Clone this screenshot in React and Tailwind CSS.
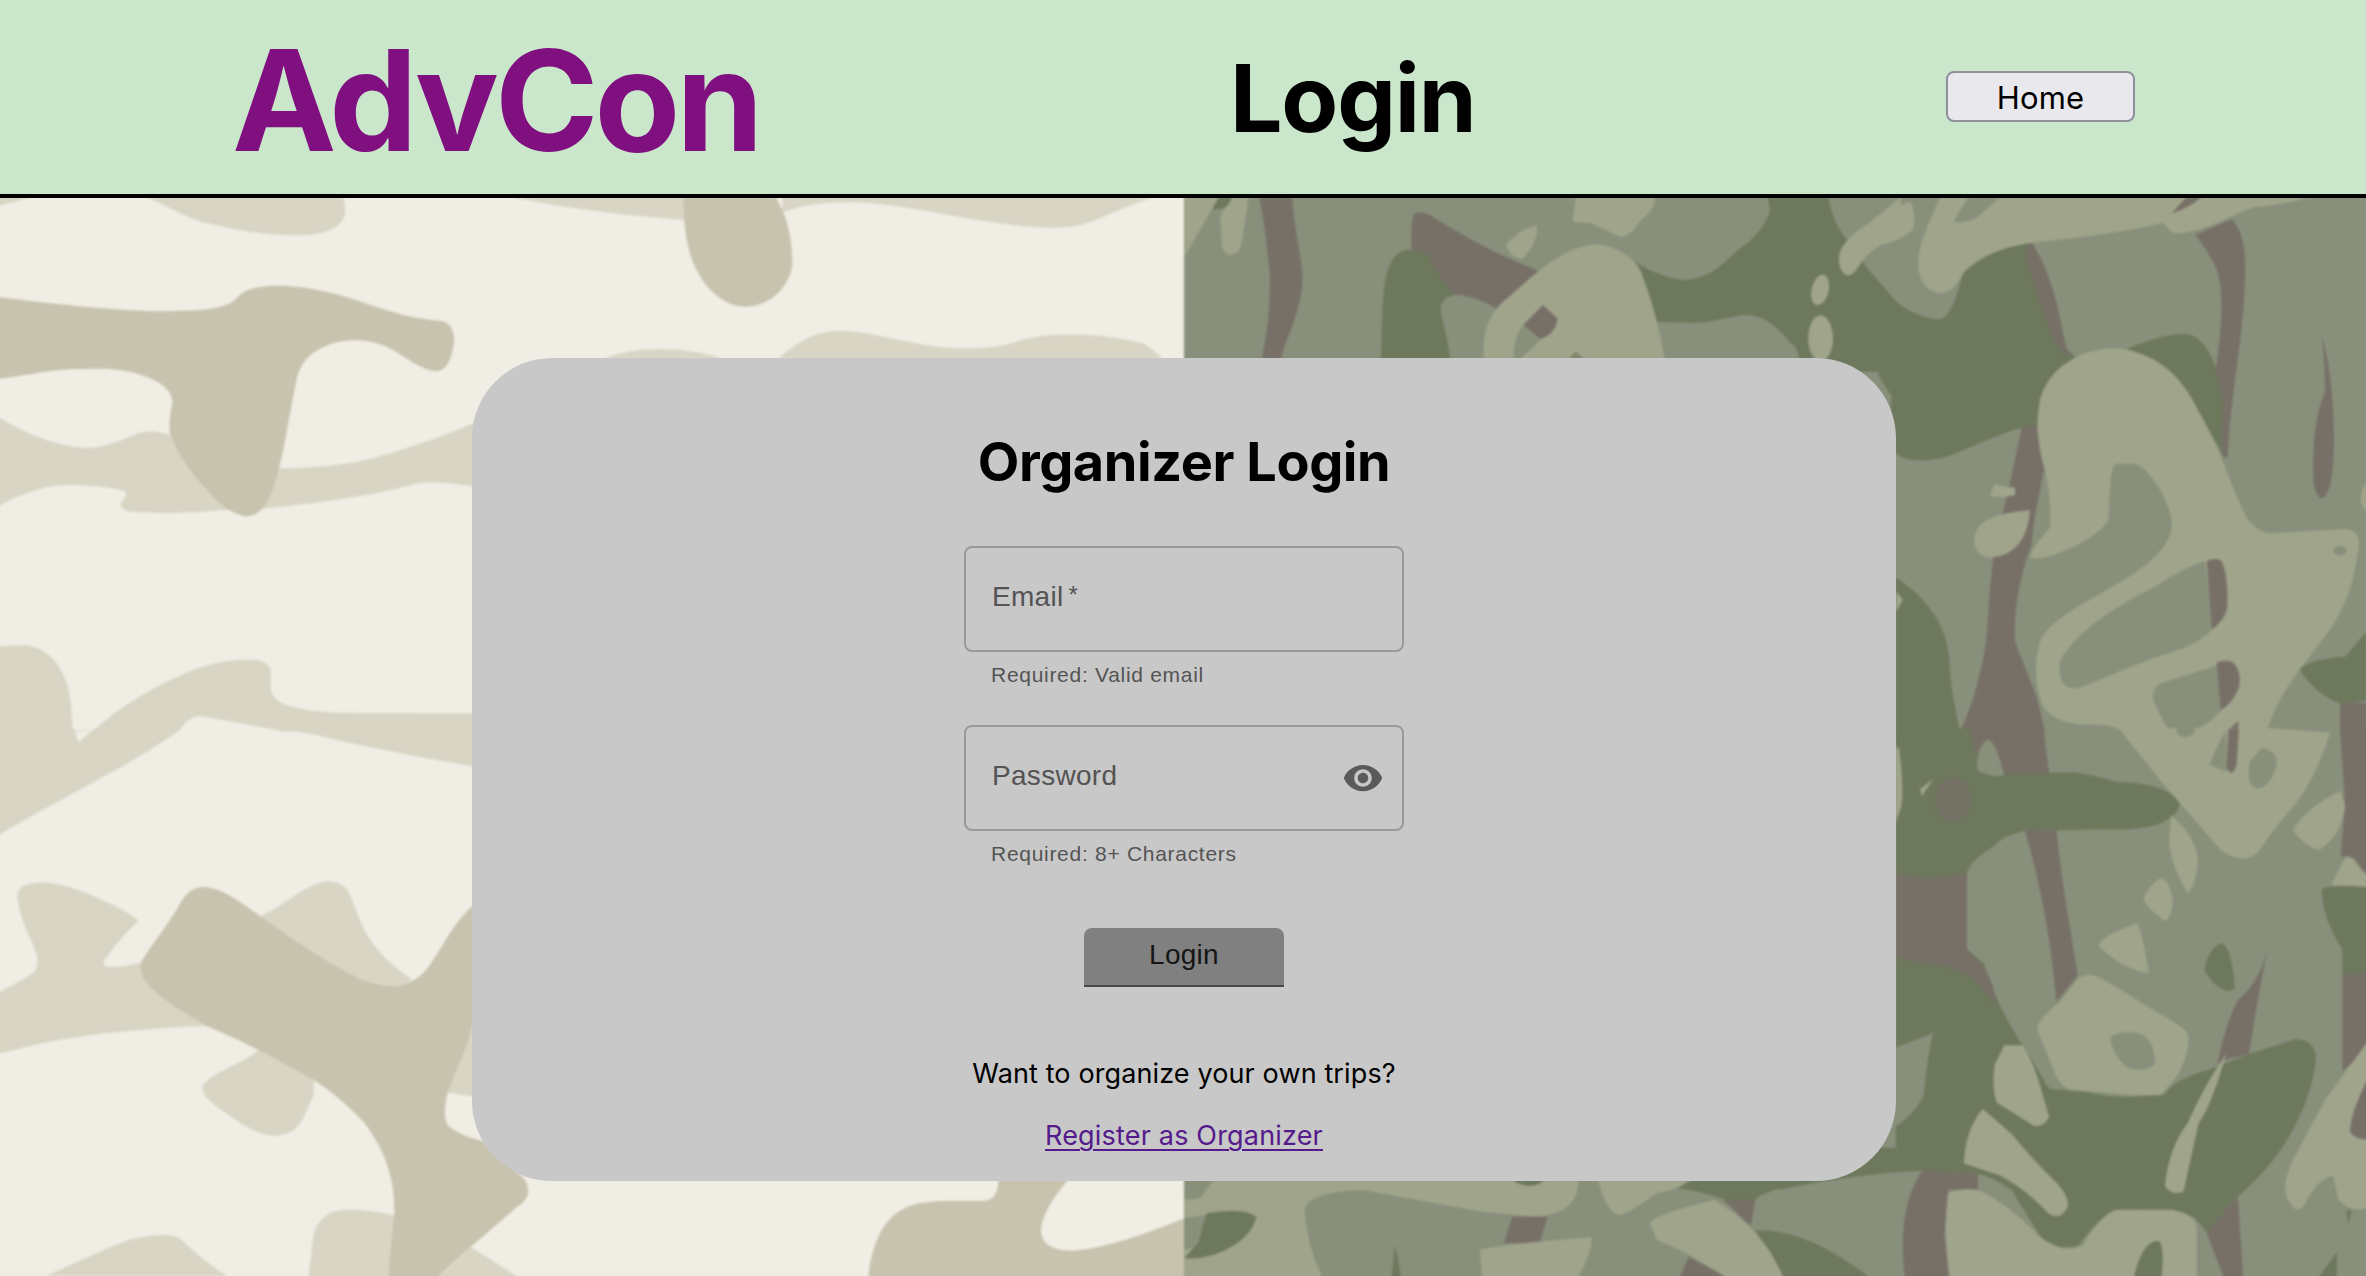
import React from "react";

function LightCamo() {
  return (
    <g>
      <rect x="-10" y="190" width="1194" height="1090" fill="#efede4" />
      <g transform="matrix(.33333 0 0 .34439 0 190)">
        <g fill="#d9d5c5">
          <path d="M-9,20 L95,20 C60,30 30,35 -9,48 Z" />
          <path d="M440,20 C520,55 570,88 640,100 C740,122 820,135 920,131 C980,125 1030,110 1035,65 Q1037,45 1030,20 Z" />
          <path d="M-9,657 C60,700 150,735 220,746 C300,755 340,735 400,712 C440,695 470,700 505,710 L560,760 L840,808 C960,805 1040,800 1130,775 C1250,745 1350,705 1440,670 L1440,865 C1380,855 1320,845 1250,852 C1150,880 1000,905 790,925 L660,930 C560,940 450,940 380,932 Q355,920 365,905 Q385,885 375,875 C300,855 180,850 120,868 Q50,885 -9,922 Z" />
          <path d="M-9,1325 L70,1322 C140,1325 175,1370 200,1430 Q215,1480 218,1570 L280,1570 C360,1500 450,1450 530,1415 C600,1380 680,1362 750,1364 Q810,1365 812,1400 L812,1450 C820,1500 900,1510 1000,1518 L1440,1520 L1440,1575 L850,1572 C760,1555 680,1540 600,1528 C570,1530 555,1545 535,1572 L280,1572 L218,1572 L-9,1574 Z" />
        </g>
        <path
          fill="#c8c3ae"
          d="M-9,311 C200,335 420,360 560,350 C640,348 690,338 712,312 C740,280 800,278 840,278 C960,282 1040,310 1130,340 C1210,365 1250,375 1320,380 Q1362,385 1362,440 C1358,480 1345,515 1320,525 C1270,530 1230,490 1170,460 C1110,430 1030,430 980,452 C930,470 905,500 892,540 C870,640 855,740 838,805 C820,870 800,950 735,947 C690,940 650,905 620,870 C570,820 540,775 510,710 Q505,670 518,615 Q515,580 470,555 C380,515 320,518 250,520 C150,520 80,540 -9,549 Z"
        />
      </g>
      <g transform="matrix(.38265 0 0 .34821 0 730)">
        <g fill="#d9d5c5">
          <path d="M-9,-4 H193 L205,35 L248,-4 H475 C400,55 330,100 260,140 C180,190 90,240 -9,305 Z" />
          <path d="M735,-4 L830,15 C940,45 1100,80 1260,108 V-6 Z" />
          <path d="M45,470 Q50,440 110,438 C180,440 250,480 280,495 Q340,525 362,548 Q330,580 300,620 L270,665 Q270,680 290,680 Q330,680 370,668 L540,850 C400,855 250,870 130,895 C80,905 40,920 -9,930 V756 Q60,720 90,695 Q100,680 97,650 C85,600 50,550 45,470 Z" />
          <path d="M680,535 C730,510 770,470 820,445 Q870,420 905,455 C925,490 935,540 960,590 Q1000,660 1075,715 L1040,760 L900,760 Z" />
          <path d="M680,915 C650,950 560,980 530,1020 Q520,1050 590,1100 C640,1140 680,1165 720,1165 C790,1160 790,1110 820,1050 V1000 Z" />
          <path d="M1240,840 L1165,1040 L1250,1055 Z" />
          <path d="M120,1568 C200,1530 300,1475 350,1460 Q440,1440 470,1460 C510,1500 550,1540 595,1568 Z" />
          <path d="M805,1575 C815,1520 812,1470 825,1430 Q850,1380 900,1378 C950,1375 1000,1385 1035,1395 L1060,1575 Z" />
          <path d="M1230,1485 L1360,1575 H1140 Z" />
        </g>
        <path
          fill="#c8c3ae"
          d="M370,665 C400,610 440,560 470,500 Q490,455 530,450 Q570,455 600,475 C660,515 690,545 740,580 C800,630 880,680 940,715 Q1000,740 1040,735 Q1090,725 1120,680 C1160,620 1180,560 1240,500 L1300,480 V700 L1235,850 C1215,930 1190,980 1170,1040 Q1155,1110 1170,1135 Q1200,1165 1265,1182 L1350,1270 Q1380,1290 1380,1325 Q1380,1350 1350,1370 C1290,1430 1220,1490 1140,1575 H1015 Q1020,1480 1030,1400 C1035,1300 1010,1210 950,1125 C910,1080 870,1040 820,1005 C740,955 650,900 540,850 C480,810 430,780 390,735 Q360,700 370,665 Z"
        />
      </g>
      <g transform="matrix(.45918 0 0 .33333 470 190)">
        <g fill="#d9d5c5">
          <path d="M90,22 C180,45 300,75 470,90 L470,20 Z" />
          <path d="M680,22 V68 C720,45 780,33 860,38 C960,48 1050,80 1130,95 C1200,110 1270,120 1320,108 C1370,95 1400,60 1490,22 Z" />
          <path d="M290,506 Q350,475 420,478 Q500,480 545,506 Z" />
          <path d="M670,506 C710,460 750,425 800,422 C860,420 950,460 1020,470 C1080,480 1150,475 1190,455 C1230,435 1290,432 1340,434 Q1410,440 1470,462 L1510,506 Z" />
        </g>
        <path fill="#c8c3ae" d="M465,20 C465,100 470,170 490,230 C510,290 550,350 600,350 C650,350 700,290 702,215 C700,130 690,80 665,20 Z" />
      </g>
      <g transform="matrix(.33333 0 0 .33333 940 1000)">
        <path fill="#c8c3ae" d="M-216,840 C-204,720 -165,630 -60,609 L0,603 H130 Q175,600 175,540 H385 C330,600 295,670 305,705 Q315,752 400,752 C500,745 620,700 735,655 V840 Z" />
      </g>
    </g>
  );
}

function DarkCamo() {
  const base = "#88907b";
  const green = "#6d785c";
  const brown = "#777067";
  const tan = "#a0a48b";
  return (
    <g>
      <rect x="1184" y="190" width="1190" height="1090" fill={base} />
      <g transform="matrix(.45918 0 0 .33333 1180 190)">
        <g fill={tan}>
          <path d="M10,20 H85 L60,80 L10,200 Z" />
          <path d="M88,90 C90,50 110,50 115,20 H150 L132,175 Q110,215 92,175 Z" />
        </g>
        <path fill={green} d="M85,20 H112 Q105,50 92,55 L70,60 Z" />
        <path fill={brown} d="M172,20 H245 C245,90 265,200 267,260 C265,370 230,440 220,508 H178 C195,400 195,330 196,260 C190,180 185,100 172,20 Z" />
        <path fill={brown} d="M510,70 Q530,62 550,80 C620,140 700,200 785,245 C760,290 720,330 695,365 L600,330 L540,250 L505,185 Q500,110 510,70 Z" />
        <path fill={green} d="M438,508 C440,400 440,300 452,240 Q470,175 500,180 L530,185 Q545,195 555,235 L605,330 L588,508 Z" />
        <path fill={base} d="M600,315 Q565,320 568,365 C575,420 585,450 588,508 H700 L695,360 Q640,315 600,315 Z" />
        <path fill={green} d="M990,215 Q1050,265 1100,270 C1160,265 1190,210 1215,180 C1260,140 1280,90 1285,60 L1280,20 H1412 C1418,70 1430,110 1450,145 L1500,240 L1570,350 V545 H1350 Q1350,470 1330,460 C1290,390 1260,375 1230,375 C1190,380 1160,400 1110,398 L1035,395 Z" />
        <g fill={tan}>
          <path d="M1570,20 L1500,100 Q1430,160 1435,215 Q1440,260 1460,255 C1480,240 1480,210 1510,180 Q1540,150 1570,145 Z" />
          <ellipse cx="1394" cy="300" rx="19" ry="46" transform="rotate(8 1394 300)" />
          <ellipse cx="1395" cy="445" rx="27" ry="69" />
          <path d="M710,165 Q740,115 778,107 Q780,160 745,208 Q715,200 710,165 Z" />
          <path d="M855,95 L862,20 H1035 Q1035,60 1000,95 Q985,135 960,142 L895,100 Z" />
          <path d="M662,508 Q655,400 700,340 C760,270 830,165 910,163 C960,170 1000,220 1005,250 C1030,340 1045,420 1055,508 Z" />
        </g>
        <path fill={base} d="M750,400 L785,450 L770,470 L740,508 H726 Q725,440 750,400 Z" />
        <path fill={brown} d="M790,345 L822,385 Q820,430 785,448 L748,405 Z" />
        <path fill={green} opacity=".7" d="M845,508 L862,485 L880,508 Z" />
      </g>

      <g transform="matrix(.33333 0 0 .34439 1880 190)">
        <path fill={green} d="M0,285 C60,340 120,375 180,375 Q210,370 235,290 L250,240 Q350,160 440,155 L520,300 L560,460 L590,490 L480,600 L470,690 H425 C350,710 280,745 200,775 Q90,800 48,765 Q25,700 35,600 L-4,540 Z" />
        <path fill={brown} d="M440,155 L458,155 C510,240 540,340 555,460 L585,487 L545,470 C500,400 470,300 440,200 Z" />
        <path fill={green} d="M740,462 Q840,418 920,418 Q970,425 1003,505 L1040,560 L1035,780 C960,650 870,500 740,462 Z" />
        <path fill={brown} d="M945,130 L1055,85 C1090,120 1097,170 1095,250 C1095,400 1050,600 1043,780 L1026,770 L1030,620 L1008,520 C1022,420 1035,300 1010,230 Q980,170 945,130 Z" />
        <path fill={brown} d="M1325,420 Q1345,490 1355,580 C1365,700 1365,800 1350,860 Q1325,930 1302,860 C1295,750 1305,650 1335,590 Q1335,500 1325,420 Z" />
        <path fill={brown} d="M425,690 L470,685 Q480,760 492,810 C480,880 460,950 455,1030 C430,1090 400,1200 405,1310 Q440,1400 470,1470 L495,1572 H240 Q280,1490 300,1400 C330,1300 320,1200 340,1070 L370,930 L390,850 Z" />
        <path fill={green} d="M46,1125 C120,1170 190,1240 205,1340 L215,1450 L240,1575 H46 Z" />
        <g fill={tan}>
          <path d="M0,100 Q40,45 90,35 Q110,60 100,115 Q60,150 0,160 Z" />
          <path d="M180,20 H1290 Q1200,45 1120,50 C1060,70 960,130 880,125 Q865,115 850,95 C700,130 570,140 440,155 Q300,180 250,240 Q220,300 180,300 Q115,290 115,210 C115,150 160,70 180,20 Z" />
          <path d="M48,1165 L68,1190 L48,1225 Z" />
          <path d="M345,852 Q355,862 405,864 L405,886 Q350,896 330,888 Z" />
          <path d="M450,930 Q440,1060 330,1068 Q275,1060 285,1000 Q300,940 450,930 Z" />
          <path d="M1460,845 Q1425,900 1460,935 Z" />
          <path
            fillRule="evenodd"
            d="M580,490 Q640,455 720,460 C860,480 920,570 960,650 C1020,750 1050,850 1080,910 Q1110,990 1170,997 L1390,985 Q1435,985 1437,1020 C1430,1100 1410,1200 1340,1290 C1280,1370 1200,1450 1160,1572 H730 Q690,1548 600,1552 Q520,1545 490,1500 C460,1430 465,1370 480,1310 Q500,1260 620,1195 C700,1150 780,1110 830,1060 Q880,1010 875,960 C860,880 800,800 760,795 H710 Q695,795 690,860 L685,960 Q650,1010 560,1045 Q490,1075 450,1068 Q455,1040 510,980 Q515,900 495,810 C470,740 465,640 490,580 Q520,520 580,490 Z"
          />
        </g>
        <g fill={base}>
          <path d="M265,20 H360 L290,80 Q250,100 220,92 Z" />
          <path d="M975,1078 L1000,1272 Q960,1320 850,1350 C750,1380 650,1430 590,1447 Q530,1450 540,1370 C580,1290 700,1210 830,1150 Q900,1100 975,1078 Z" />
          <path d="M1012,1380 L1025,1510 Q980,1560 930,1572 H870 Q840,1530 820,1480 Q815,1440 850,1430 Z" />
          <ellipse cx="1380" cy="1048" rx="20" ry="14" />
        </g>
        <g fill={brown}>
          <path d="M920,20 H965 Q930,50 875,68 Z" />
          <path d="M980,1078 Q1010,1065 1025,1078 Q1045,1120 1042,1210 Q1035,1250 996,1276 Z" />
          <path d="M1010,1372 Q1040,1362 1060,1372 Q1085,1400 1078,1440 Q1060,1490 1022,1510 Z" />
          <path d="M1040,1572 L1075,1542 V1572 Z" />
          <path d="M1380,1488 H1460 V1572 H1380 Z" />
        </g>
        <path fill={green} d="M1460,1282 L1395,1355 Q1300,1360 1258,1390 Q1300,1460 1380,1492 L1460,1482 Z" />
      </g>

      <g transform="matrix(.37372 0 0 .34821 1780 730)">
        <path fill={green} d="M310,-4 H700 L720,122 H790 Q850,130 900,150 C980,150 1040,165 1070,210 C1060,280 950,290 870,285 L740,288 L655,290 Q600,300 570,335 Q500,380 500,420 V630 L545,670 Q580,790 640,890 L650,905 L720,1030 L820,1040 Q920,1065 1030,1045 Q1060,1000 1150,975 L1255,930 Q1330,905 1380,888 Q1440,890 1433,960 C1420,1050 1380,1150 1330,1220 Q1290,1280 1225,1340 L1140,1440 L1110,1400 Q1050,1370 900,1380 Q850,1400 800,1480 Q740,1500 690,1450 L620,1320 Q560,1280 530,1275 L380,1266 Q200,1275 0,1320 V1200 H310 Z" />
        <g fill={brown}>
          <path d="M510,-4 H705 L720,125 L600,128 L520,60 Z" />
          <ellipse cx="462" cy="200" rx="48" ry="66" opacity=".75" />
          <path d="M310,410 Q400,440 500,410 V630 L545,680 Q580,740 575,790 Q530,700 450,680 L310,655 Z" />
          <path d="M655,288 L740,288 Q750,400 770,530 L797,705 L740,780 L725,640 Q700,450 655,288 Z" />
          <path d="M1305,630 Q1280,760 1255,930 L1200,945 L1170,960 Q1190,850 1225,775 Q1280,730 1305,630 Z" />
          <path d="M1498,-4 H1590 V425 L1500,360 L1512,210 Z" />
          <path d="M1505,630 H1590 V900 L1505,980 Z" />
          <path d="M380,1266 L530,1275 V1320 H450 L440,1450 L460,1580 H335 Q310,1380 380,1266 Z" />
          <path d="M1140,1440 L1225,1340 L1240,1580 H1190 Z" />
        </g>
        <g fill={base}>
          <path d="M410,870 Q395,930 385,1050 Q350,1120 290,1150 V920 Z" />
          <path d="M555,28 Q575,25 600,130 Q570,140 528,115 Q525,50 555,28 Z" />
          <path d="M530,1275 Q600,1300 630,1340 L700,1460 L560,1400 Z" />
        </g>
        <g fill={green}>
          <path d="M1450,455 Q1480,445 1590,450 V700 H1505 V630 Q1450,540 1450,455 Z" />
          <path d="M1180,612 Q1210,620 1217,745 Q1180,765 1135,690 Q1145,630 1180,612 Z" />
          <path d="M-10,1440 Q120,1470 250,1580 H-10 Z" />
          <path d="M1515,1380 H1530 L1520,1420 Z" />
          <path d="M1490,1500 L1435,1580 H1490 Z" />
        </g>
        <g fill={tan}>
          <path d="M310,50 L318,50 Q332,160 325,220 L308,270 Z" />
          <path d="M410,140 L380,190 L375,170 Z" />
          <path d="M905,-6 L1030,160 L1180,345 Q1240,390 1280,350 Q1330,270 1370,225 C1420,160 1450,80 1472,8 L1310,-6 Z" />
          <path d="M1500,175 L1512,220 Q1500,310 1440,345 Q1400,330 1372,288 Q1410,220 1500,175 Z" />
          <path d="M1515,362 L1535,370 L1570,420 V450 L1475,445 Q1500,390 1515,362 Z" />
          <path d="M1045,245 Q1110,300 1118,370 Q1115,440 1092,470 Q1050,400 1042,330 Z" />
          <path d="M1020,425 Q1040,430 1052,490 Q1045,545 1030,548 Q980,510 972,485 Q990,440 1020,425 Z" />
          <path d="M955,555 Q965,560 987,698 Q920,690 852,620 Q860,590 955,555 Z" />
          <path d="M830,702 Q850,702 1000,805 Q1095,860 1093,880 Q1095,930 1065,990 L1020,1048 H940 L770,1032 Q740,1010 730,970 L688,860 Q690,830 750,780 L800,710 Z" />
          <path d="M600,905 H650 Q675,950 690,1000 L720,1110 Q710,1140 680,1137 L580,1070 Q565,1020 575,960 Z" />
          <path d="M542,1088 L620,1160 Q690,1250 740,1300 Q775,1340 770,1370 Q750,1410 720,1390 Q660,1320 590,1280 L492,1245 Q495,1150 542,1088 Z" />
          <path d="M1195,930 Q1150,1090 1120,1130 L1080,1325 Q1050,1340 1030,1310 Q1040,1200 1090,1130 Q1140,1010 1195,930 Z" />
          <path d="M450,1330 Q500,1310 540,1325 Q620,1370 690,1450 Q760,1510 810,1480 Q860,1390 900,1378 H1050 Q1110,1390 1115,1430 V1580 H455 Q435,1450 450,1330 Z" />
          <path d="M1590,870 Q1500,1000 1460,1060 L1370,1240 Q1345,1300 1355,1340 Q1385,1410 1410,1350 Q1440,1290 1480,1280 L1495,1350 Q1530,1395 1590,1365 Z" />
        </g>
        <g fill={base}>
          <ellipse cx="1085" cy="0" rx="25" ry="20" />
          <path d="M1150,100 Q1170,40 1195,0 V120 Z" />
          <path d="M1290,50 Q1330,60 1330,100 Q1310,170 1275,168 Q1245,160 1258,90 Z" />
          <path d="M885,880 Q930,858 970,875 Q1005,900 1003,960 Q980,985 930,970 Q885,930 885,880 Z" />
        </g>
        <path fill={brown} d="M1200,-4 H1228 L1222,100 Q1210,140 1195,110 Z" />
        <path fill={brown} d="M1590,970 Q1530,1080 1525,1150 Q1535,1180 1590,1176 Z" />
        <path fill={green} d="M945,1580 Q970,1460 1015,1468 Q1030,1490 1020,1580 Z" />
      </g>

      <g transform="matrix(.45918 0 0 .33333 1170 1150)">
        <path fill={tan} d="M31,90 H890 Q890,190 800,200 L680,185 L420,120 Q300,125 293,180 Q300,300 335,390 H31 Z" />
        <path fill={base} d="M31,90 H95 L65,145 L31,150 Z" />
        <path fill={base} d="M31,205 L80,195 L55,290 L31,300 Z" />
        <path fill={green} d="M80,190 Q160,170 188,200 Q180,250 140,285 Q90,330 31,325 L60,280 Z" />
        <path fill={green} d="M745,90 H815 Q785,125 745,90 Z" />
        <path fill={brown} d="M745,200 H822 L805,280 H727 Z" />
        <path fill={tan} d="M675,300 Q700,285 918,262 Q920,310 885,390 H680 Z" />
        <path fill={green} d="M490,285 L505,390 H482 Z" />
        <path fill={tan} d="M932,90 H1140 Q1100,120 1060,130 Q1000,190 980,195 Q950,190 932,90 Z" />
        <path fill={green} d="M1135,90 H1400 L1570,40 V68 L1420,85 Q1280,125 1275,150 L1210,150 Q1160,125 1105,115 Z" />
        <path fill={brown} d="M1205,150 H1275 L1265,228 Z" />
        <path fill={green} d="M1275,240 Q1400,240 1525,390 H1330 Z" />
        <path fill={tan} d="M1045,220 Q1060,190 1185,150 C1260,210 1310,290 1338,390 H1220 Q1120,300 1060,270 Z" />
        <path fill={brown} d="M1130,320 L1222,390 H1107 Z" />
      </g>
    </g>
  );
}

function CamoBackground() {
  return (
    <svg
      className="col-start-1 row-start-1 -mx-1 -my-1 block h-[1086px] w-[2374px] blur-[0.8px]"
      viewBox="-4 194 2374 1086"
      preserveAspectRatio="none"
      aria-hidden="true"
    >
      <LightCamo />
      <DarkCamo />
    </svg>
  );
}

function VisibilityIcon() {
  return (
    <svg className="size-[42px] fill-[#5a5a5a]" viewBox="0 0 24 24" aria-hidden="true">
      <path d="M12 4.5C7 4.5 2.73 7.61 1 12c1.73 4.39 6 7.5 11 7.5s9.27-3.11 11-7.5c-1.73-4.39-6-7.5-11-7.5zM12 17c-2.76 0-5-2.24-5-5s2.24-5 5-5 5 2.24 5 5-2.24 5-5 5zm0-8c-1.66 0-3 1.34-3 3s1.34 3 3 3 3-1.34 3-3-1.34-3-3-3z" />
    </svg>
  );
}

function Field({ label, required, helper, children }) {
  return (
    <div className="w-[440px] font-['Liberation_Sans',Arial,sans-serif] text-[#545454]">
      <div className="flex h-[106px] items-center justify-between rounded-lg border-2 border-[#999999] pr-[18px] pl-[26px]">
        <label className="flex pb-[5px] text-[28px] leading-8 tracking-[0.3px]">
          {label}
          {required && <span className="ml-[5px] text-[24px] leading-7">*</span>}
        </label>
        {children}
      </div>
      <p className="mt-[11px] ml-[27px] text-[21px] leading-6 tracking-[0.71px]">{helper}</p>
    </div>
  );
}

export default function App() {
  return (
    <div className="h-[1276px] w-[2366px] overflow-hidden font-[Inter,sans-serif] text-black">
      <header className="flex h-[198px] items-center justify-between border-b-4 border-black bg-[#cae7cb] pr-[231px] pl-[232px]">
        <h1 className="pt-[6px] text-[140px] leading-[140px] font-bold tracking-[-4px] text-[#800f80]">AdvCon</h1>
        <h2 className="pt-[2px] text-[93px] leading-[100px] font-bold tracking-[-1.15px]">Login</h2>
        <button className="mb-px flex h-[51px] w-[189px] items-center justify-center rounded-lg border-2 border-[#8f8f9d] bg-[#e9e9ed] pt-[2px] text-[31px] leading-9 tracking-[0.2px]">
          Home
        </button>
      </header>

      <main className="grid h-[1078px] overflow-hidden bg-[linear-gradient(to_right,#efede4_50%,#88907b_50%)]">
        <CamoBackground />
        <section className="relative col-start-1 row-start-1 mt-[160px] ml-[472px] flex h-[823px] w-[1424px] flex-col items-center rounded-[80px] bg-[#c8c8c8] pt-[72px]">
          <h3 className="text-[54px] leading-[64px] font-bold tracking-[-0.42px]">Organizer Login</h3>
          <div className="mt-[52px] flex flex-col gap-[38px]">
            <Field label="Email" required helper="Required: Valid email" />
            <Field label="Password" helper="Required: 8+ Characters">
              <VisibilityIcon />
            </Field>
          </div>
          <button className="mt-[62px] flex h-[59px] w-[200px] items-center justify-center rounded-t-lg border-b-2 border-[#4a4a4a] bg-[#808080] pb-1 font-['Liberation_Sans',Arial,sans-serif] text-[28px] leading-8 tracking-[0.25px] text-[#151515]">
            Login
          </button>
          <p className="mt-[70px] text-[27px] leading-[34px] tracking-[0.12px]">Want to organize your own trips?</p>
          <a
            href="#register"
            className="mt-7 text-[27px] leading-[34px] tracking-[0.18px] text-[#551a8b] underline decoration-2 underline-offset-[4px]"
          >
            Register as Organizer
          </a>
        </section>
      </main>
    </div>
  );
}
